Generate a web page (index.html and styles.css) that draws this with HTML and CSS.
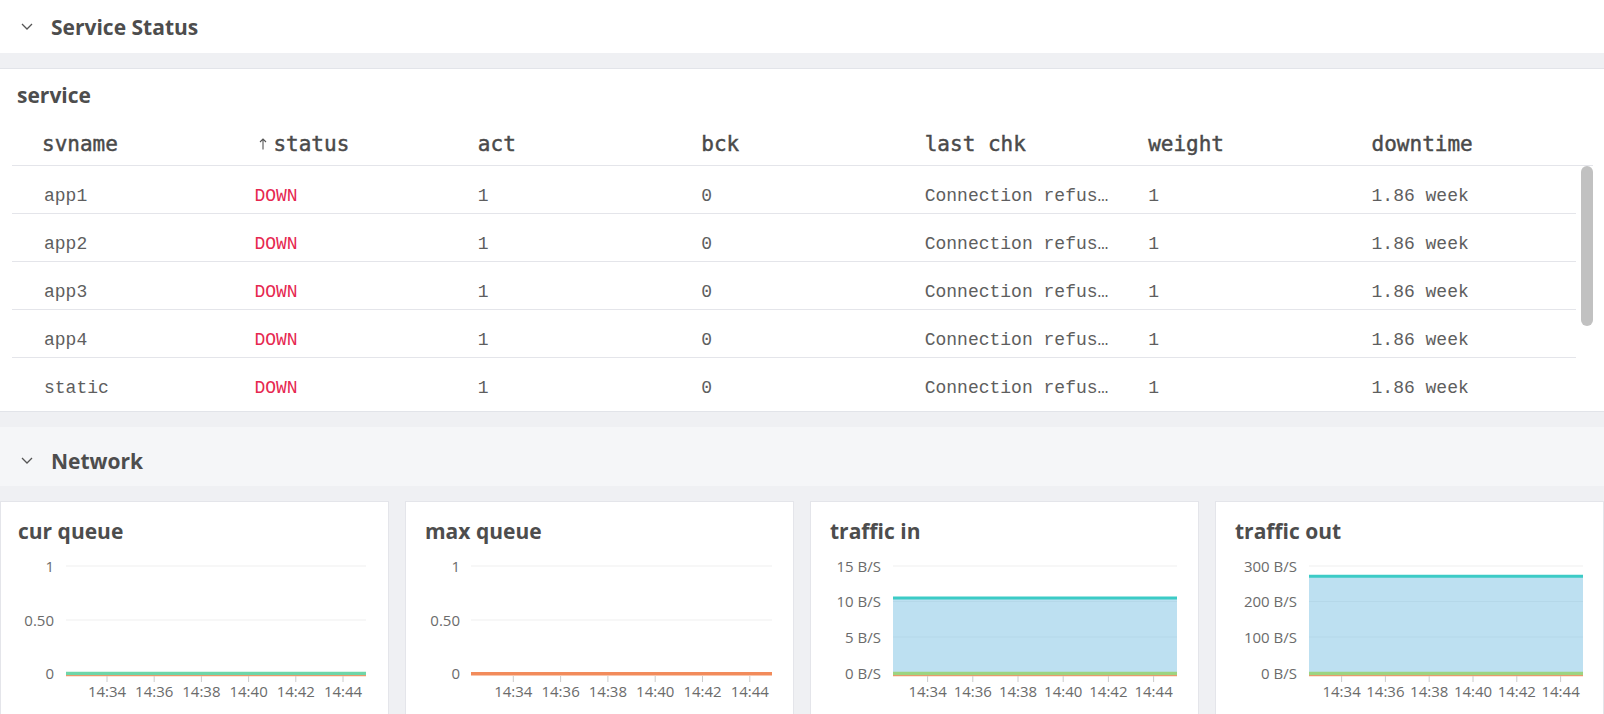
FILE: index.html
```html
<!DOCTYPE html>
<html lang="en">
<head>
<meta charset="utf-8">
<title>Service Status</title>
<link rel="stylesheet" href="styles.css">
</head>
<body>
<header class="section-head">
  <svg class="chev" width="12" height="7" viewBox="0 0 12 7"><polyline points="1,1 6,6 11,1" fill="none" stroke="#555" stroke-width="1.3"/></svg>
  <h2>Service Status</h2>
</header>
<main class="board">
  <section class="panel">
    <h3 class="panel-title">service</h3>
    <div class="thead">
      <div class="cell">svname</div>
      <div class="cell"><svg class="sort" width="8" height="12" viewBox="0 0 8 12"><path d="M4 11.5V1M1 4L4 1L7 4" fill="none" stroke="#555" stroke-width="1.1"/></svg>status</div>
      <div class="cell">act</div>
      <div class="cell">bck</div>
      <div class="cell">last chk</div>
      <div class="cell">weight</div>
      <div class="cell">downtime</div>
    </div>
    <div class="tbody">
      <div class="rows">
        <div class="tr"><div class="cell">app1</div><div class="cell down">DOWN</div><div class="cell">1</div><div class="cell">0</div><div class="cell">Connection refused</div><div class="cell">1</div><div class="cell">1.86 week</div></div>
        <div class="tr"><div class="cell">app2</div><div class="cell down">DOWN</div><div class="cell">1</div><div class="cell">0</div><div class="cell">Connection refused</div><div class="cell">1</div><div class="cell">1.86 week</div></div>
        <div class="tr"><div class="cell">app3</div><div class="cell down">DOWN</div><div class="cell">1</div><div class="cell">0</div><div class="cell">Connection refused</div><div class="cell">1</div><div class="cell">1.86 week</div></div>
        <div class="tr"><div class="cell">app4</div><div class="cell down">DOWN</div><div class="cell">1</div><div class="cell">0</div><div class="cell">Connection refused</div><div class="cell">1</div><div class="cell">1.86 week</div></div>
        <div class="tr"><div class="cell">static</div><div class="cell down">DOWN</div><div class="cell">1</div><div class="cell">0</div><div class="cell">Connection refused</div><div class="cell">1</div><div class="cell">1.86 week</div></div>
      </div>
      <div class="scroll-thumb"></div>
    </div>
  </section>
</main>
<header class="section-head alt">
  <svg class="chev" width="12" height="7" viewBox="0 0 12 7"><polyline points="1,1 6,6 11,1" fill="none" stroke="#555" stroke-width="1.3"/></svg>
  <h2>Network</h2>
</header>
<div class="cards">
  <div class="card">
    <h3 class="card-title first">cur queue</h3>
    <svg class="chart" width="387" height="170" viewBox="1 0 387 170">
      <g class="grid"><line x1="66" y1="20" x2="366" y2="20"/><line x1="66" y1="74" x2="366" y2="74"/><line x1="66" y1="127" x2="366" y2="127"/></g>
      <g class="ylab" text-anchor="end"><text x="54" y="25.5">1</text><text x="54" y="79.5">0.50</text><text x="54" y="132.5">0</text></g>
      <line x1="66" y1="128.8" x2="366" y2="128.8" stroke="#e99a6c" stroke-width="3"/>
      <line x1="66" y1="127.3" x2="366" y2="127.3" stroke="#6fd6a9" stroke-width="3.2"/>
      <g class="ticks"><line x1="107" y1="130" x2="107" y2="136"/><line x1="154.2" y1="130" x2="154.2" y2="136"/><line x1="201.4" y1="130" x2="201.4" y2="136"/><line x1="248.6" y1="130" x2="248.6" y2="136"/><line x1="295.8" y1="130" x2="295.8" y2="136"/><line x1="343" y1="130" x2="343" y2="136"/></g>
      <g class="xlab" text-anchor="middle"><text x="107" y="151">14:34</text><text x="154.2" y="151">14:36</text><text x="201.4" y="151">14:38</text><text x="248.6" y="151">14:40</text><text x="295.8" y="151">14:42</text><text x="343" y="151">14:44</text></g>
    </svg>
  </div>
  <div class="card">
    <h3 class="card-title">max queue</h3>
    <svg class="chart" width="387" height="170" viewBox="1 0 387 170">
      <g class="grid"><line x1="66" y1="20" x2="367" y2="20"/><line x1="66" y1="74" x2="367" y2="74"/><line x1="66" y1="127" x2="367" y2="127"/></g>
      <g class="ylab" text-anchor="end"><text x="55" y="25.5">1</text><text x="55" y="79.5">0.50</text><text x="55" y="132.5">0</text></g>
      <line x1="66" y1="127.8" x2="367" y2="127.8" stroke="#f28b5b" stroke-width="3.4"/>
      <g class="ticks"><line x1="108.3" y1="130" x2="108.3" y2="136"/><line x1="155.6" y1="130" x2="155.6" y2="136"/><line x1="202.9" y1="130" x2="202.9" y2="136"/><line x1="250.2" y1="130" x2="250.2" y2="136"/><line x1="297.5" y1="130" x2="297.5" y2="136"/><line x1="344.8" y1="130" x2="344.8" y2="136"/></g>
      <g class="xlab" text-anchor="middle"><text x="108.3" y="151">14:34</text><text x="155.6" y="151">14:36</text><text x="202.9" y="151">14:38</text><text x="250.2" y="151">14:40</text><text x="297.5" y="151">14:42</text><text x="344.8" y="151">14:44</text></g>
    </svg>
  </div>
  <div class="card">
    <h3 class="card-title">traffic in</h3>
    <svg class="chart" width="387" height="170" viewBox="1 0 387 170">
      <g class="grid"><line x1="83" y1="20" x2="367" y2="20"/><line x1="83" y1="55.5" x2="367" y2="55.5"/><line x1="83" y1="91" x2="367" y2="91"/><line x1="83" y1="127" x2="367" y2="127"/></g>
      <rect x="83" y="52" width="284" height="76" fill="rgba(123,193,227,0.5)"/>
      <g class="ylab" text-anchor="end"><text x="71" y="25.5">15 B/S</text><text x="71" y="61">10 B/S</text><text x="71" y="96.5">5 B/S</text><text x="71" y="132.5">0 B/S</text></g>
      <line x1="83" y1="52" x2="367" y2="52" stroke="#3ccbc6" stroke-width="3"/>
      <line x1="83" y1="128.8" x2="367" y2="128.8" stroke="#e99a6c" stroke-width="3"/>
      <line x1="83" y1="127.3" x2="367" y2="127.3" stroke="#9dd481" stroke-width="3.2"/>
      <g class="ticks"><line x1="117.6" y1="130" x2="117.6" y2="136"/><line x1="162.8" y1="130" x2="162.8" y2="136"/><line x1="208" y1="130" x2="208" y2="136"/><line x1="253.2" y1="130" x2="253.2" y2="136"/><line x1="298.4" y1="130" x2="298.4" y2="136"/><line x1="343.6" y1="130" x2="343.6" y2="136"/></g>
      <g class="xlab" text-anchor="middle"><text x="117.6" y="151">14:34</text><text x="162.8" y="151">14:36</text><text x="208" y="151">14:38</text><text x="253.2" y="151">14:40</text><text x="298.4" y="151">14:42</text><text x="343.6" y="151">14:44</text></g>
    </svg>
  </div>
  <div class="card">
    <h3 class="card-title">traffic out</h3>
    <svg class="chart" width="387" height="170" viewBox="1 0 387 170">
      <g class="grid"><line x1="94" y1="20" x2="368" y2="20"/><line x1="94" y1="55.5" x2="368" y2="55.5"/><line x1="94" y1="91" x2="368" y2="91"/><line x1="94" y1="127" x2="368" y2="127"/></g>
      <rect x="94" y="30.3" width="274" height="97.7" fill="rgba(123,193,227,0.5)"/>
      <g class="ylab" text-anchor="end"><text x="82" y="25.5">300 B/S</text><text x="82" y="61">200 B/S</text><text x="82" y="96.5">100 B/S</text><text x="82" y="132.5">0 B/S</text></g>
      <line x1="94" y1="30.3" x2="368" y2="30.3" stroke="#3ccbc6" stroke-width="3"/>
      <line x1="94" y1="128.8" x2="368" y2="128.8" stroke="#e99a6c" stroke-width="3"/>
      <line x1="94" y1="127.3" x2="368" y2="127.3" stroke="#9dd481" stroke-width="3.2"/>
      <g class="ticks"><line x1="126.6" y1="130" x2="126.6" y2="136"/><line x1="170.4" y1="130" x2="170.4" y2="136"/><line x1="214.2" y1="130" x2="214.2" y2="136"/><line x1="258" y1="130" x2="258" y2="136"/><line x1="301.8" y1="130" x2="301.8" y2="136"/><line x1="345.6" y1="130" x2="345.6" y2="136"/></g>
      <g class="xlab" text-anchor="middle"><text x="126.6" y="151">14:34</text><text x="170.4" y="151">14:36</text><text x="214.2" y="151">14:38</text><text x="258" y="151">14:40</text><text x="301.8" y="151">14:42</text><text x="345.6" y="151">14:44</text></g>
    </svg>
  </div>
</div>
</body>
</html>
```

FILE: styles.css
```css
* { box-sizing: border-box; }
html, body { margin: 0; }
body {
  background: #eff0f3;
  font-family: "Open Sans", "Noto Sans", sans-serif;
  color: #4d4d4d;
  height: 714px;
  overflow: hidden;
}
.section-head {
  display: flex;
  align-items: center;
  gap: 18px;
  height: 53px;
  padding-left: 21px;
  background: #ffffff;
}
.section-head.alt {
  height: 59px;
  padding-top: 8px;
  background: #f5f6f8;
}
.section-head h2 {
  margin: 0;
  font-size: 21px;
  font-weight: 700;
  color: #4d4d4d;
}
.chev { display: block; }
.board { padding: 15px 0; }
.panel {
  background: #ffffff;
  border-top: 1px solid #e2e4e9;
  border-bottom: 1px solid #e2e4e9;
  padding: 0 11px 6px 12px;
}
.panel-title {
  margin: 0;
  height: 49px;
  display: flex;
  align-items: center;
  padding: 2px 0 0 5px;
  font-size: 21px;
  font-weight: 700;
  color: #4d4d4d;
}
.thead, .tr {
  display: grid;
  grid-template-columns: repeat(7, 1fr);
  align-items: center;
}
.thead {
  height: 48px;
  padding: 4px 17px 0 0;
  border-bottom: 1px solid #e4e5ea;
  font-family: "DejaVu Sans Mono", monospace;
  font-size: 21px;
  font-weight: 400;
  color: #4a4a4a;
  -webkit-text-stroke: 0.45px #4a4a4a;
}
.thead .cell { display: flex; align-items: center; }
.sort { margin: 0 6px 0 5px; }
.cell {
  padding: 0 16px 0 19px;
  white-space: nowrap;
  overflow: hidden;
  text-overflow: ellipsis;
}
.cell:first-child { padding-left: 30px; }
.tr .cell:first-child { padding-left: 32px; }
.tbody {
  position: relative;
  height: 239px;
  overflow: hidden;
}
.scroll-thumb {
  position: absolute;
  top: 0;
  right: 0;
  width: 12px;
  height: 160px;
  border-radius: 6px;
  background: #c1c1c1;
}
.rows { margin-right: 17px; }
.tr {
  height: 48px;
  padding-top: 12px;
  border-bottom: 1px solid #e4e5ea;
  font-family: "Liberation Mono", monospace;
  font-size: 18px;
  color: #5e5e5e;
}
.tr:last-child { border-bottom: 0; }
.down { color: #e6274f; }
.cards {
  display: flex;
  gap: 16px;
  padding-top: 15px;
}
.card {
  flex: 1 1 0;
  min-width: 0;
  height: 240px;
  background: #ffffff;
  border: 1px solid #e4e5ea;
}
.card-title {
  margin: 0;
  height: 44px;
  padding: 15px 0 0 19px;
  font-size: 21px;
  line-height: 28px;
  font-weight: 700;
  color: #4d4d4d;
}
.card-title.first { padding-left: 17px; }
.chart { display: block; overflow: visible; }
.grid line { stroke: #efefef; stroke-width: 1; }
.ticks line { stroke: #cccccc; stroke-width: 1; }
.ylab text, .xlab text {
  font-family: "Open Sans", sans-serif;
  font-size: 15px;
  fill: #6b6b6b;
}
```
